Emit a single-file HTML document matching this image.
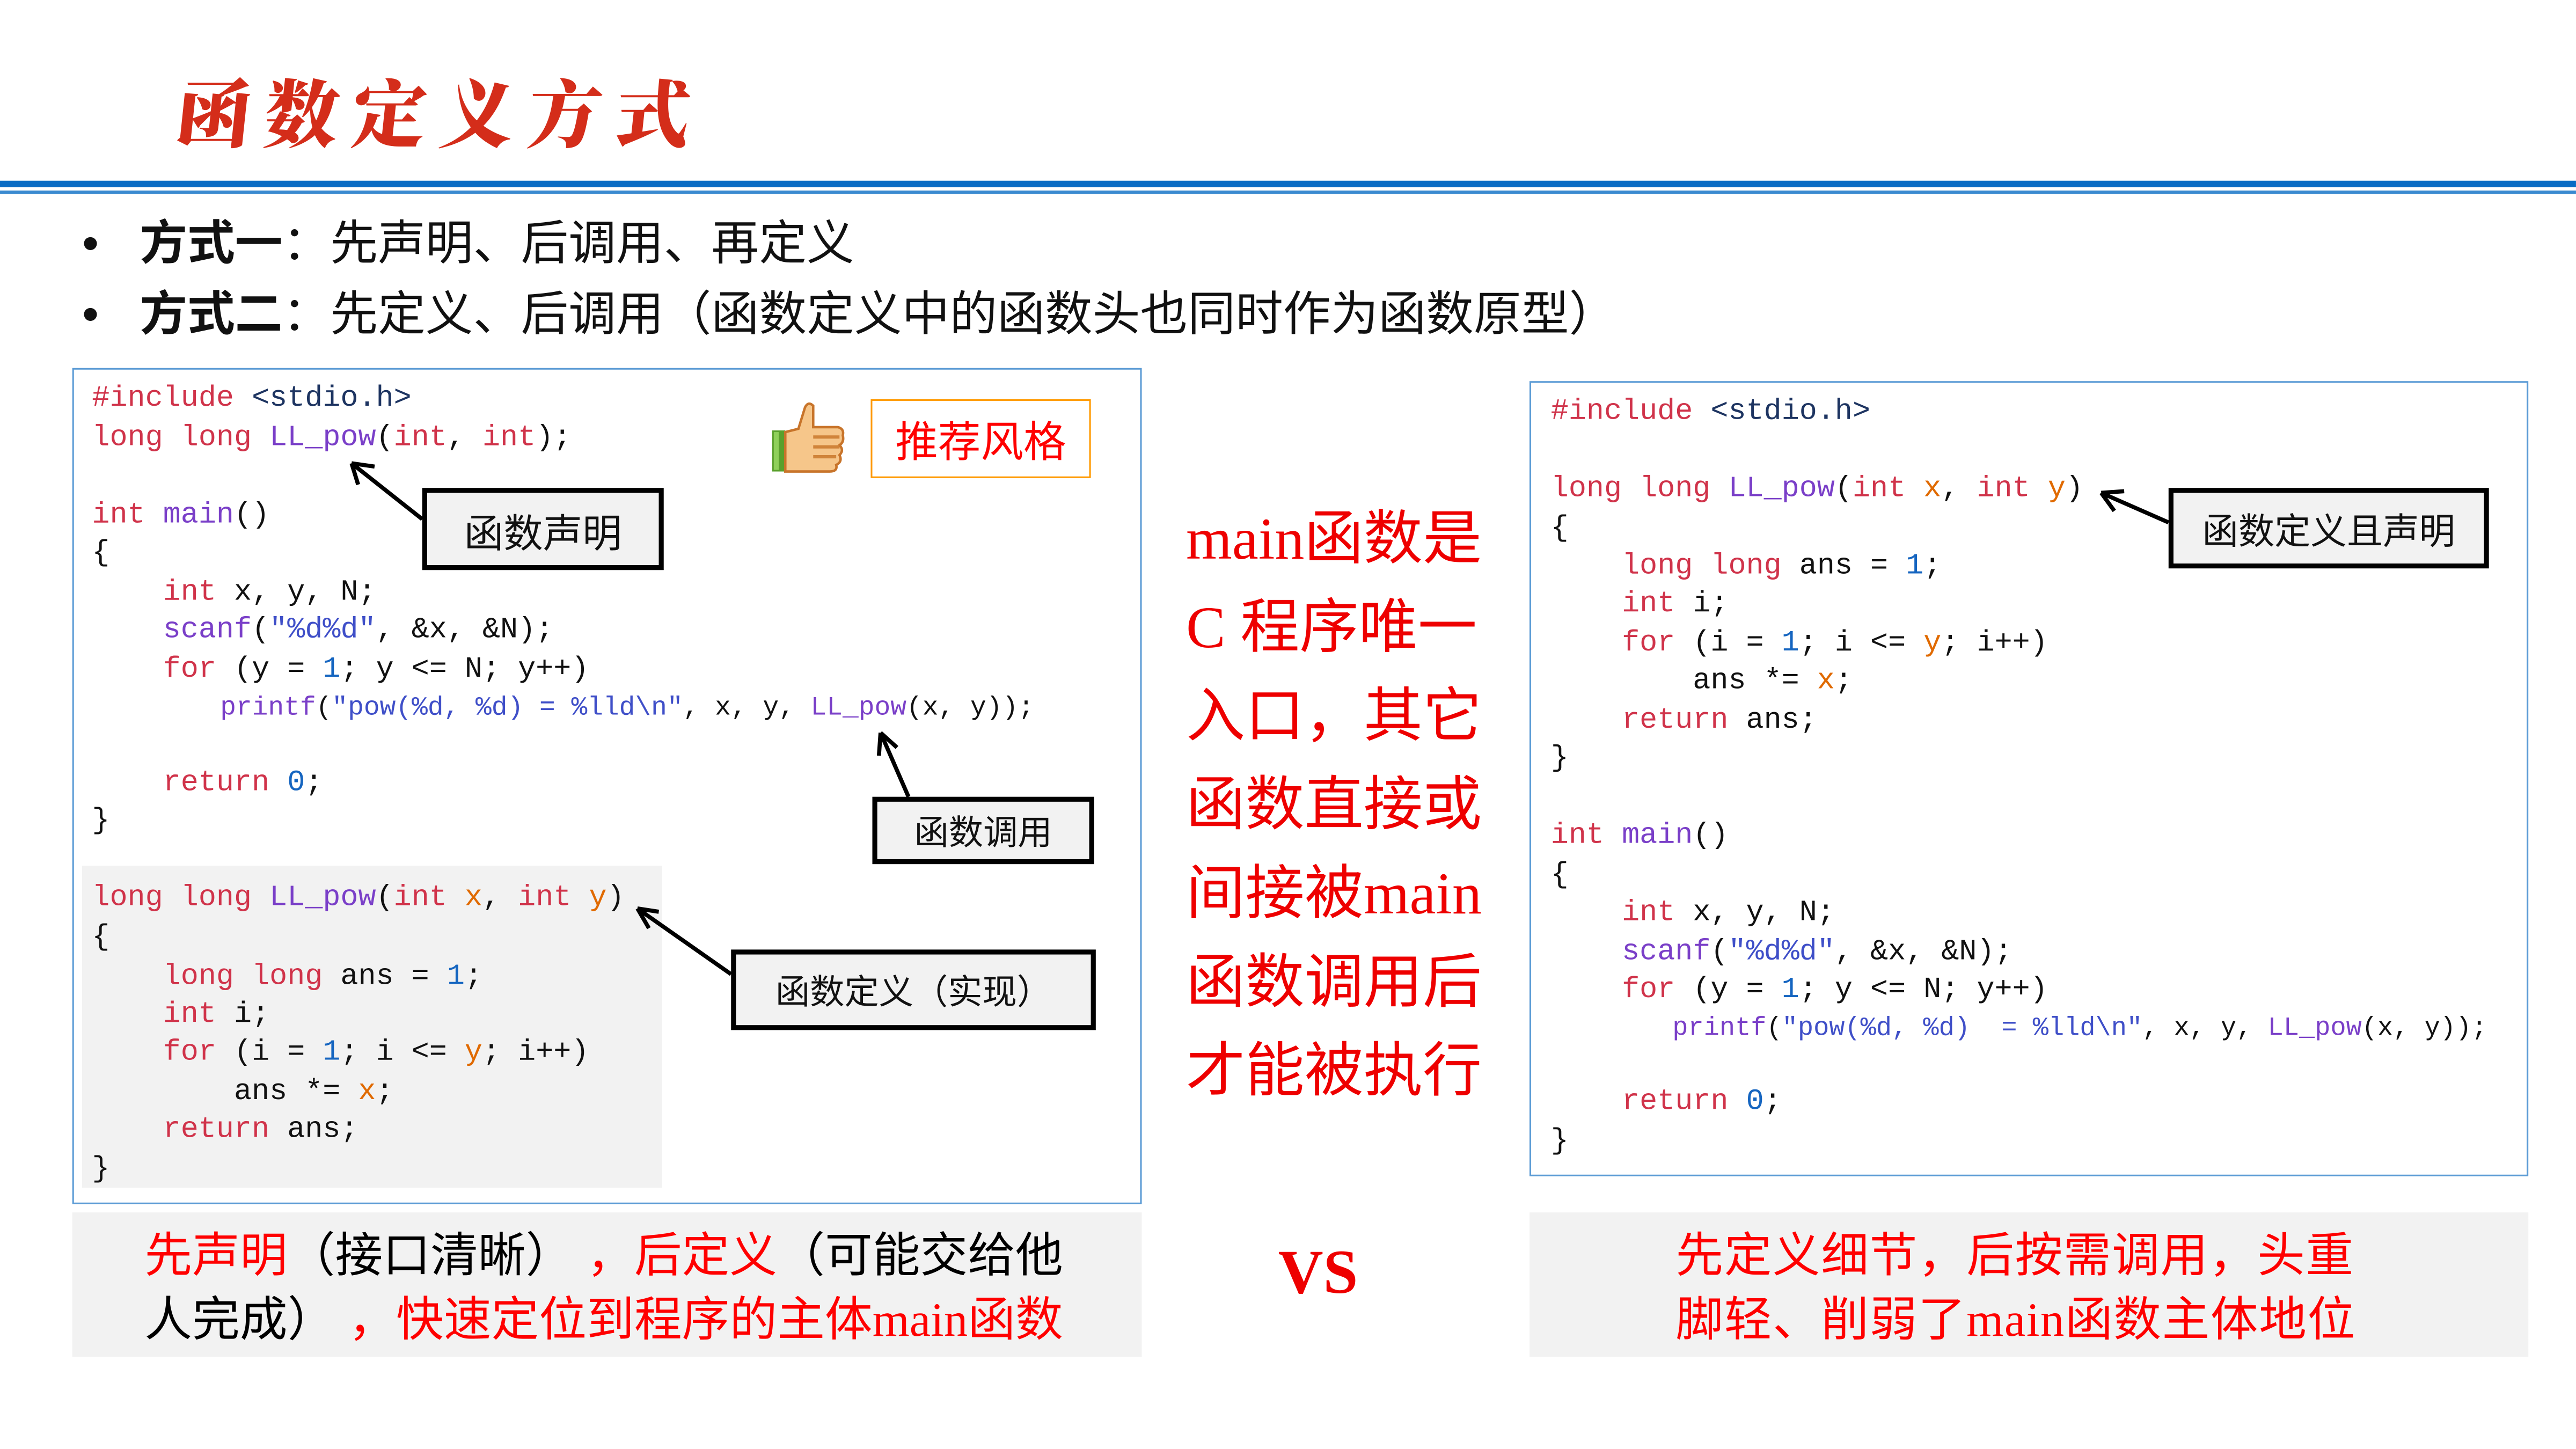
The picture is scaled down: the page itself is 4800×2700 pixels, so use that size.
<!DOCTYPE html>
<html><head><meta charset="utf-8"><style>
html,body{margin:0;padding:0;background:#fff;}
body{width:4800px;height:2700px;overflow:hidden;position:relative;}
#w{position:absolute;left:0;top:0;width:1568px;height:882px;transform:scale(3.0612);transform-origin:0 0;}
.a{position:absolute;white-space:pre;}
.c{position:absolute;white-space:pre;font-family:"Liberation Mono",monospace;font-size:18px;line-height:24px;color:#111;}
.s{font-size:16.2px;}
.k{color:#d0334a}.f{color:#7a3fc8}.n{color:#1565c0}.q{color:#3f4fc8}.v{color:#e06a00}.h{color:#1d3461}
.cj{font-family:"Liberation Sans","Noto Sans CJK SC",sans-serif;}
.box{position:absolute;border:3px solid #000;background:#f2f2f2;box-sizing:border-box;font-family:"Liberation Sans","Noto Sans CJK SC",sans-serif;font-size:23px;display:flex;align-items:center;justify-content:center;color:#111;}
.r{color:#f00}
</style></head><body><div id="w">
<div class="a" style="left:108px;top:34px;font-family:'Noto Serif CJK SC',serif;font-weight:900;font-size:45px;letter-spacing:8.5px;color:#d42d1a;transform:skewX(-6deg);">函数定义方式</div>
<div class="a" style="left:0;top:110px;width:1568px;height:4px;background:#0a6cc4"></div>
<div class="a" style="left:0;top:116px;width:1568px;height:1.5px;background:#3a8ad0"></div>

<div class="a cj" style="left:50px;top:130px;font-size:29px;line-height:38px;color:#111">•</div>
<div class="a cj" style="left:50px;top:173px;font-size:29px;line-height:38px;color:#111">•</div>
<div class="a cj" style="left:85px;top:130px;font-size:29px;line-height:38px;color:#111"><b>方式一</b>：先声明、后调用、再定义</div>
<div class="a cj" style="left:85px;top:173px;font-size:29px;line-height:38px;color:#111"><b>方式二</b>：先定义、后调用（函数定义中的函数头也同时作为函数原型）</div>

<!-- left box -->
<div class="a" style="left:44px;top:224px;width:651px;height:509px;border:1px solid #5b9bd5;box-sizing:border-box"></div>
<div class="a" style="left:50px;top:527px;width:353px;height:196px;background:#f2f2f2"></div>
<div class="c" style="left:56px;top:231px"><span class="k">#include</span> <span class="h">&lt;stdio.h&gt;</span></div>
<div class="c" style="left:56px;top:255px"><span class="k">long long</span> <span class="f">LL_pow</span>(<span class="k">int</span>, <span class="k">int</span>);</div>
<div class="c" style="left:56px;top:302px"><span class="k">int</span> <span class="f">main</span>()</div>
<div class="c" style="left:56px;top:325px">{</div>
<div class="c" style="left:56px;top:349px">    <span class="k">int</span> x, y, N;</div>
<div class="c" style="left:56px;top:372px">    <span class="f">scanf</span>(<span class="q">"%d%d"</span>, &amp;x, &amp;N);</div>
<div class="c" style="left:56px;top:396px">    <span class="k">for</span> (y = <span class="n">1</span>; y &lt;= N; y++)</div>
<div class="c s" style="left:134px;top:419px"><span class="f">printf</span>(<span class="q">"pow(%d, %d) = %lld\n"</span>, x, y, <span class="f">LL_pow</span>(x, y));</div>
<div class="c" style="left:56px;top:465px">    <span class="k">return</span> <span class="n">0</span>;</div>
<div class="c" style="left:56px;top:488px">}</div>
<div class="c" style="left:56px;top:535px"><span class="k">long long</span> <span class="f">LL_pow</span>(<span class="k">int</span> <span class="v">x</span>, <span class="k">int</span> <span class="v">y</span>)</div>
<div class="c" style="left:56px;top:559px">{</div>
<div class="c" style="left:56px;top:583px">    <span class="k">long long</span> ans = <span class="n">1</span>;</div>
<div class="c" style="left:56px;top:606px">    <span class="k">int</span> i;</div>
<div class="c" style="left:56px;top:629px">    <span class="k">for</span> (i = <span class="n">1</span>; i &lt;= <span class="v">y</span>; i++)</div>
<div class="c" style="left:56px;top:653px">        ans *= <span class="v">x</span>;</div>
<div class="c" style="left:56px;top:676px">    <span class="k">return</span> ans;</div>
<div class="c" style="left:56px;top:700px">}</div>

<!-- thumb -->
<svg class="a" style="left:468px;top:244px" width="48" height="46" viewBox="0 0 48 46">
<rect x="2" y="18" width="8" height="25" fill="#5aa02c"/><rect x="3" y="19" width="3" height="23" fill="#8fd05a"/>
<path d="M10 19 L18 17 L22 4 Q24 0 27 3 L27 16 L42 16 Q46 17 45 21 Q46 25 43 27 Q46 30 43 33 Q45 37 41 39 Q42 43 37 43 L10 43 Z" fill="#f6c68a" stroke="#c8742a" stroke-width="1.5"/>
<path d="M27 22 H43 M27 28 H43 M27 34 H41" stroke="#d0843a" stroke-width="2"/>
</svg>
<div class="a cj" style="left:530px;top:243px;width:134px;height:48px;border:1.5px solid #ff9900;box-sizing:border-box;color:#f00;font-size:26px;display:flex;align-items:center;justify-content:center">推荐风格</div>

<div class="box" style="left:257px;top:297px;width:147px;height:50px;font-size:24px">函数声明</div>
<div class="box" style="left:531px;top:485px;width:135px;height:41px;font-size:21px">函数调用</div>
<div class="box" style="left:445px;top:578px;width:222px;height:49px;font-size:21px">函数定义（实现）</div>

<!-- right box -->
<div class="a" style="left:931px;top:232px;width:608px;height:484px;border:1px solid #5b9bd5;box-sizing:border-box"></div>
<div class="c" style="left:944px;top:239px"><span class="k">#include</span> <span class="h">&lt;stdio.h&gt;</span></div>
<div class="c" style="left:944px;top:286px"><span class="k">long long</span> <span class="f">LL_pow</span>(<span class="k">int</span> <span class="v">x</span>, <span class="k">int</span> <span class="v">y</span>)</div>
<div class="c" style="left:944px;top:310px">{</div>
<div class="c" style="left:944px;top:333px">    <span class="k">long long</span> ans = <span class="n">1</span>;</div>
<div class="c" style="left:944px;top:356px">    <span class="k">int</span> i;</div>
<div class="c" style="left:944px;top:380px">    <span class="k">for</span> (i = <span class="n">1</span>; i &lt;= <span class="v">y</span>; i++)</div>
<div class="c" style="left:944px;top:403px">        ans *= <span class="v">x</span>;</div>
<div class="c" style="left:944px;top:427px">    <span class="k">return</span> ans;</div>
<div class="c" style="left:944px;top:450px">}</div>
<div class="c" style="left:944px;top:497px"><span class="k">int</span> <span class="f">main</span>()</div>
<div class="c" style="left:944px;top:521px">{</div>
<div class="c" style="left:944px;top:544px">    <span class="k">int</span> x, y, N;</div>
<div class="c" style="left:944px;top:568px">    <span class="f">scanf</span>(<span class="q">"%d%d"</span>, &amp;x, &amp;N);</div>
<div class="c" style="left:944px;top:591px">    <span class="k">for</span> (y = <span class="n">1</span>; y &lt;= N; y++)</div>
<div class="c" style="left:1018px;top:614px;font-size:15.9px"><span class="f">printf</span>(<span class="q">"pow(%d, %d)  = %lld\n"</span>, x, y, <span class="f">LL_pow</span>(x, y));</div>
<div class="c" style="left:944px;top:659px">    <span class="k">return</span> <span class="n">0</span>;</div>
<div class="c" style="left:944px;top:683px">}</div>
<div class="box" style="left:1320px;top:297px;width:195px;height:49px;font-size:22px">函数定义且声明</div>

<!-- arrows -->
<svg class="a" style="left:0;top:0" width="1568" height="882">
<g stroke="#000" stroke-width="2.5" fill="none">
<path d="M257 316 L214 282 M214 282 L228 284 M214 282 L218 295"/>
<path d="M553 485 L536 446 M536 446 L535 460 M536 446 L546 455"/>
<path d="M445 593 L388 553 M388 553 L395 565 M388 553 L401 555"/>
<path d="M1320 318 L1279 300 M1279 300 L1287 311 M1279 300 L1293 299"/>
</g></svg>

<!-- middle -->
<div class="a" style="left:722px;top:301px;font-family:'Liberation Serif','Noto Sans CJK SC',sans-serif;font-size:36px;line-height:54px;color:#ee0000">main函数是
C 程序唯一
入口，其它
函数直接或
间接被main
函数调用后
才能被执行</div>
<div class="a" style="left:778px;top:753px;font-family:'Liberation Serif',serif;font-weight:bold;font-size:38px;color:#e00">VS</div>

<!-- bottom -->
<div class="a" style="left:44px;top:738px;width:651px;height:88px;background:#f2f2f2"></div>
<div class="a cj" style="left:88px;top:746px;font-size:29px;line-height:39px;color:#000"><span class="r">先声明</span>（接口清晰） <span class="r">，后定义</span>（可能交给他
人完成） <span class="r">，快速定位到程序的主体<span style="font-family:'Liberation Serif',serif">main</span>函数</span></div>
<div class="a" style="left:931px;top:738px;width:608px;height:88px;background:#f2f2f2"></div>
<div class="a cj" style="left:1020px;top:746px;font-size:29px;line-height:39px;letter-spacing:0.5px;color:#f00">先定义细节，后按需调用，头重
脚轻、削弱了<span style="font-family:'Liberation Serif',serif">main</span>函数主体地位</div>
</div></body></html>
